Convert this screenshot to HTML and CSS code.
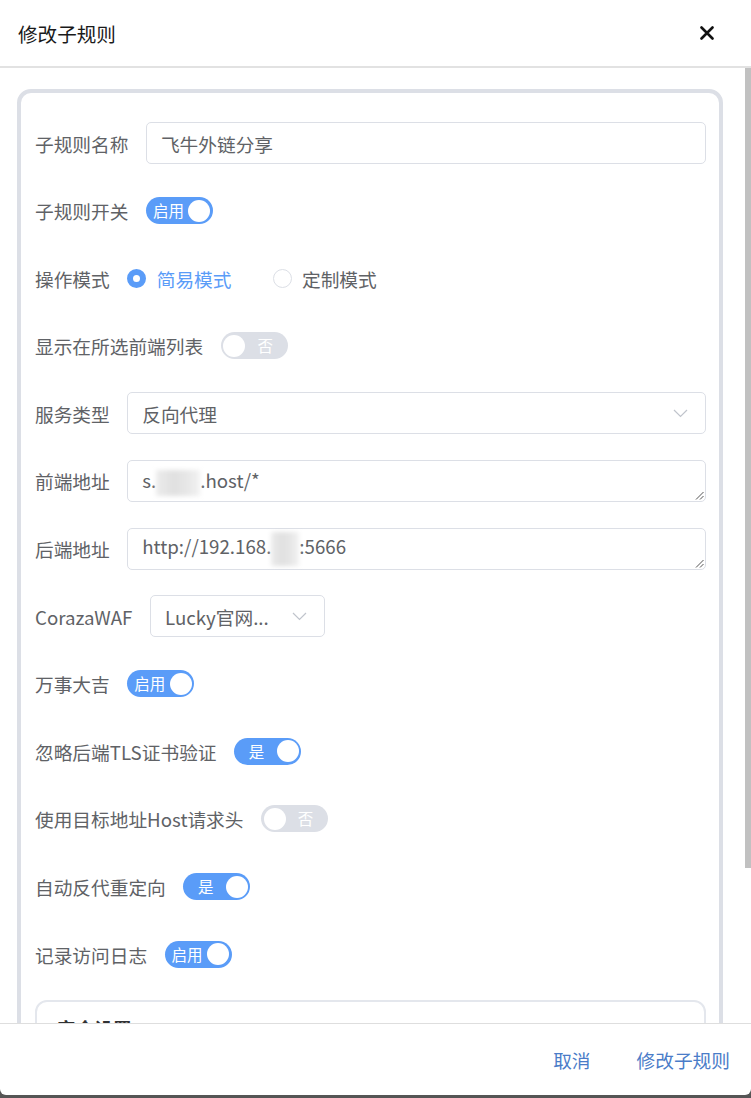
FILE: index.html
```html
<!doctype html>
<html>
  <head>
    <meta charset="utf-8">
    <title>修改子规则</title>
    <link rel="stylesheet" href="styles.css">
  </head>
  <body>
    <div class='dialog'>
      <header class='dialog-header'>
        <span class='dialog-title'>修改子规则</span>
        <svg class='dialog-close' width='14' height='14' viewBox='0 0 14 14'>
          <path d='M1.5 1.5 L12.5 12.5 M12.5 1.5 L1.5 12.5' stroke='#111' stroke-width='2.6' stroke-linecap='round' />
        </svg>
      </header>

      <main class='dialog-body'>
        <div class='card'>

          <div class='row'>
            <label class='row-label'>子规则名称</label>
            <div class='input'>飞牛外链分享</div>
          </div>

          <div class='row'>
            <label class='row-label'>子规则开关</label>
            <span class='switch on'><span class='switch-text'>启用</span><span class='switch-knob'></span></span>
          </div>

          <div class='row'>
            <label class='row-label'>操作模式</label>
            <span class='radio checked'><span class='radio-dot'></span>简易模式</span>
            <span class='radio'><span class='radio-dot'></span>定制模式</span>
          </div>

          <div class='row'>
            <label class='row-label'>显示在所选前端列表</label>
            <span class='switch'><span class='switch-knob'></span><span class='switch-text'>否</span></span>
          </div>

          <div class='row'>
            <label class='row-label'>服务类型</label>
            <div class='input select'>
              <span>反向代理</span>
              <svg class='chevron' width='15' height='9' viewBox='0 0 15 9'>
                <path d='M1 1 L7.5 7.5 L14 1' fill='none' stroke='#c0c4cc' stroke-width='1.2' />
              </svg>
            </div>
          </div>

          <div class='row'>
            <label class='row-label'>前端地址</label>
            <div class='input textarea'>
              <span>s.<span class='blur blur-wide'></span>.host/*</span>
              <svg class='resize' width='9' height='9' viewBox='0 0 9 9'>
                <path d='M1 8.5 L8.5 1 M5 8.5 L8.5 5' stroke='#555' stroke-width='1' />
              </svg>
            </div>
          </div>

          <div class='row'>
            <label class='row-label'>后端地址</label>
            <div class='input textarea'>
              <span>http://192.168.<span class='blur blur-narrow'></span>:5666</span>
              <svg class='resize' width='9' height='9' viewBox='0 0 9 9'>
                <path d='M1 8.5 L8.5 1 M5 8.5 L8.5 5' stroke='#555' stroke-width='1' />
              </svg>
            </div>
          </div>

          <div class='row'>
            <label class='row-label'>CorazaWAF</label>
            <div class='input select select-small'>
              <span>Lucky官网...</span>
              <svg class='chevron' width='15' height='9' viewBox='0 0 15 9'>
                <path d='M1 1 L7.5 7.5 L14 1' fill='none' stroke='#c0c4cc' stroke-width='1.2' />
              </svg>
            </div>
          </div>

          <div class='row'>
            <label class='row-label'>万事大吉</label>
            <span class='switch on'><span class='switch-text'>启用</span><span class='switch-knob'></span></span>
          </div>

          <div class='row'>
            <label class='row-label'>忽略后端TLS证书验证</label>
            <span class='switch on'><span class='switch-text'>是</span><span class='switch-knob'></span></span>
          </div>

          <div class='row'>
            <label class='row-label'>使用目标地址Host请求头</label>
            <span class='switch'><span class='switch-knob'></span><span class='switch-text'>否</span></span>
          </div>

          <div class='row'>
            <label class='row-label'>自动反代重定向</label>
            <span class='switch on'><span class='switch-text'>是</span><span class='switch-knob'></span></span>
          </div>

          <div class='row'>
            <label class='row-label'>记录访问日志</label>
            <span class='switch on'><span class='switch-text'>启用</span><span class='switch-knob'></span></span>
          </div>

          <div class='sub-card'>
            <div class='sub-card-title'>安全设置</div>
          </div>

        </div>
      </main>

      <div class='scroll-thumb'></div>

      <footer class='dialog-footer'>
        <a class='footer-btn'>取消</a>
        <a class='footer-btn'>修改子规则</a>
      </footer>
    </div>
  </body>
</html>
```

FILE: styles.css
```css
:root {
  --text-color: #606266;
  --title-color: #1a1a1a;
  --primary: #5a9cf8;
  --border-color: #dcdfe6;
  --off-color: #dcdfe6;
  --link-color: #4a7cc8;
}

html, body {
  margin: 0;
  height: 100%;
}

body {
  background: #555;
  font-family: "Noto Sans CJK SC", "Noto Sans", sans-serif;
  color: var(--text-color);
}

.dialog {
  position: relative;
  height: 1095px;
  background: #fff;
  border-radius: 0 0 6px 6px;
  display: flex;
  flex-direction: column;
  overflow: hidden;
}

.dialog-header {
  height: 66px;
  flex-shrink: 0;
  display: flex;
  align-items: center;
  justify-content: space-between;
  padding: 0 37px 0 18px;
  border-bottom: 2px solid #e2e2e2;
}

.dialog-title {
  font-size: 19.6px;
  color: var(--title-color);
}

.dialog-body {
  flex: 1;
  overflow-y: auto;
  scrollbar-width: none;
  padding: 21px 28px 20px 17px;
}

/* drawn scrollbar, the headless shot hides the real one */
.scroll-thumb {
  position: absolute;
  top: 68px;
  right: 0;
  width: 6px;
  height: 800px;
  background: #c1c1c1;
}

.card {
  border: 4px solid var(--border-color);
  border-radius: 14px;
  padding: 28.5px 13px 20px 14px;
}

.row {
  display: flex;
  align-items: center;
  height: 43px;
  margin-bottom: 24.6px;
}

.row-label {
  font-size: 18.7px;
  line-height: 43px;
  padding-right: 17.5px;
  white-space: nowrap;
}

.input {
  flex: 1;
  height: 42px;
  box-sizing: border-box;
  border: 1px solid var(--border-color);
  border-radius: 5px;
  padding: 0 14px;
  font-size: 18.7px;
  display: flex;
  align-items: center;
  position: relative;
}

.select {
  justify-content: space-between;
  padding-right: 17px;
}

.select-small {
  flex: none;
  width: 175px;
}

.chevron {
  display: block;
}

.resize {
  position: absolute;
  right: 1px;
  bottom: 1px;
}

.blur {
  display: inline-block;
  vertical-align: middle;
  height: 26px;
  background: linear-gradient(90deg, #ececec, #e0e0e0 40%, #e7e7e7 70%, #f2f2f2);
  filter: blur(2px);
}
.blur-wide {
  width: 44px;
}
.blur-narrow {
  width: 28px;
  height: 34px;
}

.switch {
  display: inline-flex;
  align-items: center;
  width: 67px;
  height: 27px;
  box-sizing: border-box;
  padding: 0 2.5px;
  border-radius: 14px;
  background: var(--off-color);
}

.switch.on {
  background: var(--primary);
}

.switch-text {
  flex: 1;
  text-align: center;
  color: #fff;
  font-size: 15.5px;
  line-height: 27px;
}

.switch-knob {
  width: 22px;
  height: 22px;
  border-radius: 50%;
  background: #fff;
}

.radio {
  display: inline-flex;
  align-items: center;
  gap: 10.5px;
  font-size: 18.7px;
  margin-right: 41px;
}

.radio-dot {
  width: 19px;
  height: 19px;
  box-sizing: border-box;
  border-radius: 50%;
  border: 1px solid var(--border-color);
  background: #fff;
}

.radio.checked {
  color: var(--primary);
}

.radio.checked .radio-dot {
  border: 6px solid var(--primary);
}

.sub-card {
  border: 2px solid #e4e7ed;
  border-radius: 12px;
  height: 100px;
  padding: 12px 20px;
}

.sub-card-title {
  font-size: 18.7px;
  color: #303133;
  font-weight: bold;
}

.dialog-footer {
  height: 71px;
  flex-shrink: 0;
  border-top: 1px solid #dedede;
  display: flex;
  align-items: center;
  justify-content: flex-end;
  gap: 46px;
  padding-right: 21px;
}

.footer-btn {
  font-size: 18.7px;
  color: var(--link-color);
}
```
